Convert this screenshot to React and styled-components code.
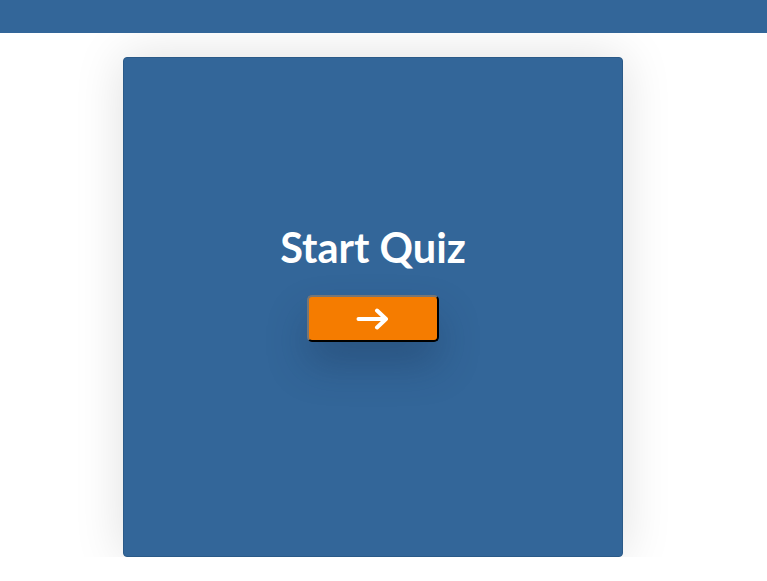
import React from 'react';
import styled, { createGlobalStyle } from 'styled-components';

const GlobalStyle = createGlobalStyle`
  html, body {
    margin: 0;
    padding: 0;
    background: #ffffff;
    font-family: Lato, "Open Sans", sans-serif;
  }
`;

const Header = styled.header`
  height: 33px;
  background: #336699;
`;

const Stage = styled.main`
  overflow: hidden;
  padding: 24px 21px 0 0;
`;

const Card = styled.section`
  box-sizing: border-box;
  width: 500px;
  height: 500px;
  margin: 0 auto;
  background: #336699;
  border: 1px solid #2b5a88;
  border-radius: 4px;
  box-shadow: 0 0 50px rgba(0, 0, 0, 0.13);
  display: flex;
  flex-direction: column;
  align-items: center;
  padding-top: 165px;
`;

const Title = styled.h1`
  margin: 0 0 23px;
  color: #ffffff;
  font-family: Lato, sans-serif;
  font-weight: 700;
  font-size: 41.5px;
  line-height: 49px;
`;

const StartButton = styled.button`
  box-sizing: border-box;
  width: 132px;
  height: 47px;
  display: flex;
  align-items: center;
  justify-content: center;
  background: #f57c00;
  border: 2px outset #767676;
  border-right-color: #1e1e1e;
  border-bottom-color: #1e1e1e;
  border-radius: 5px;
  box-shadow: 0 22px 40px rgba(20, 40, 70, 0.3);
  cursor: pointer;
  padding: 0;
`;

const Arrow = () => (
  <svg width="34" height="22" viewBox="0 0 34 22" fill="none">
    <path
      d="M2.5 11 H30 M21 2.5 L30 11 L21 19.5"
      stroke="#ffffff"
      strokeWidth="4"
      strokeLinecap="round"
      strokeLinejoin="round"
    />
  </svg>
);

const App = () => (
  <>
    <GlobalStyle />
    <Header />
    <Stage>
      <Card>
        <Title>Start Quiz</Title>
        <StartButton aria-label="Start quiz">
          <Arrow />
        </StartButton>
      </Card>
    </Stage>
  </>
);

export default App;
